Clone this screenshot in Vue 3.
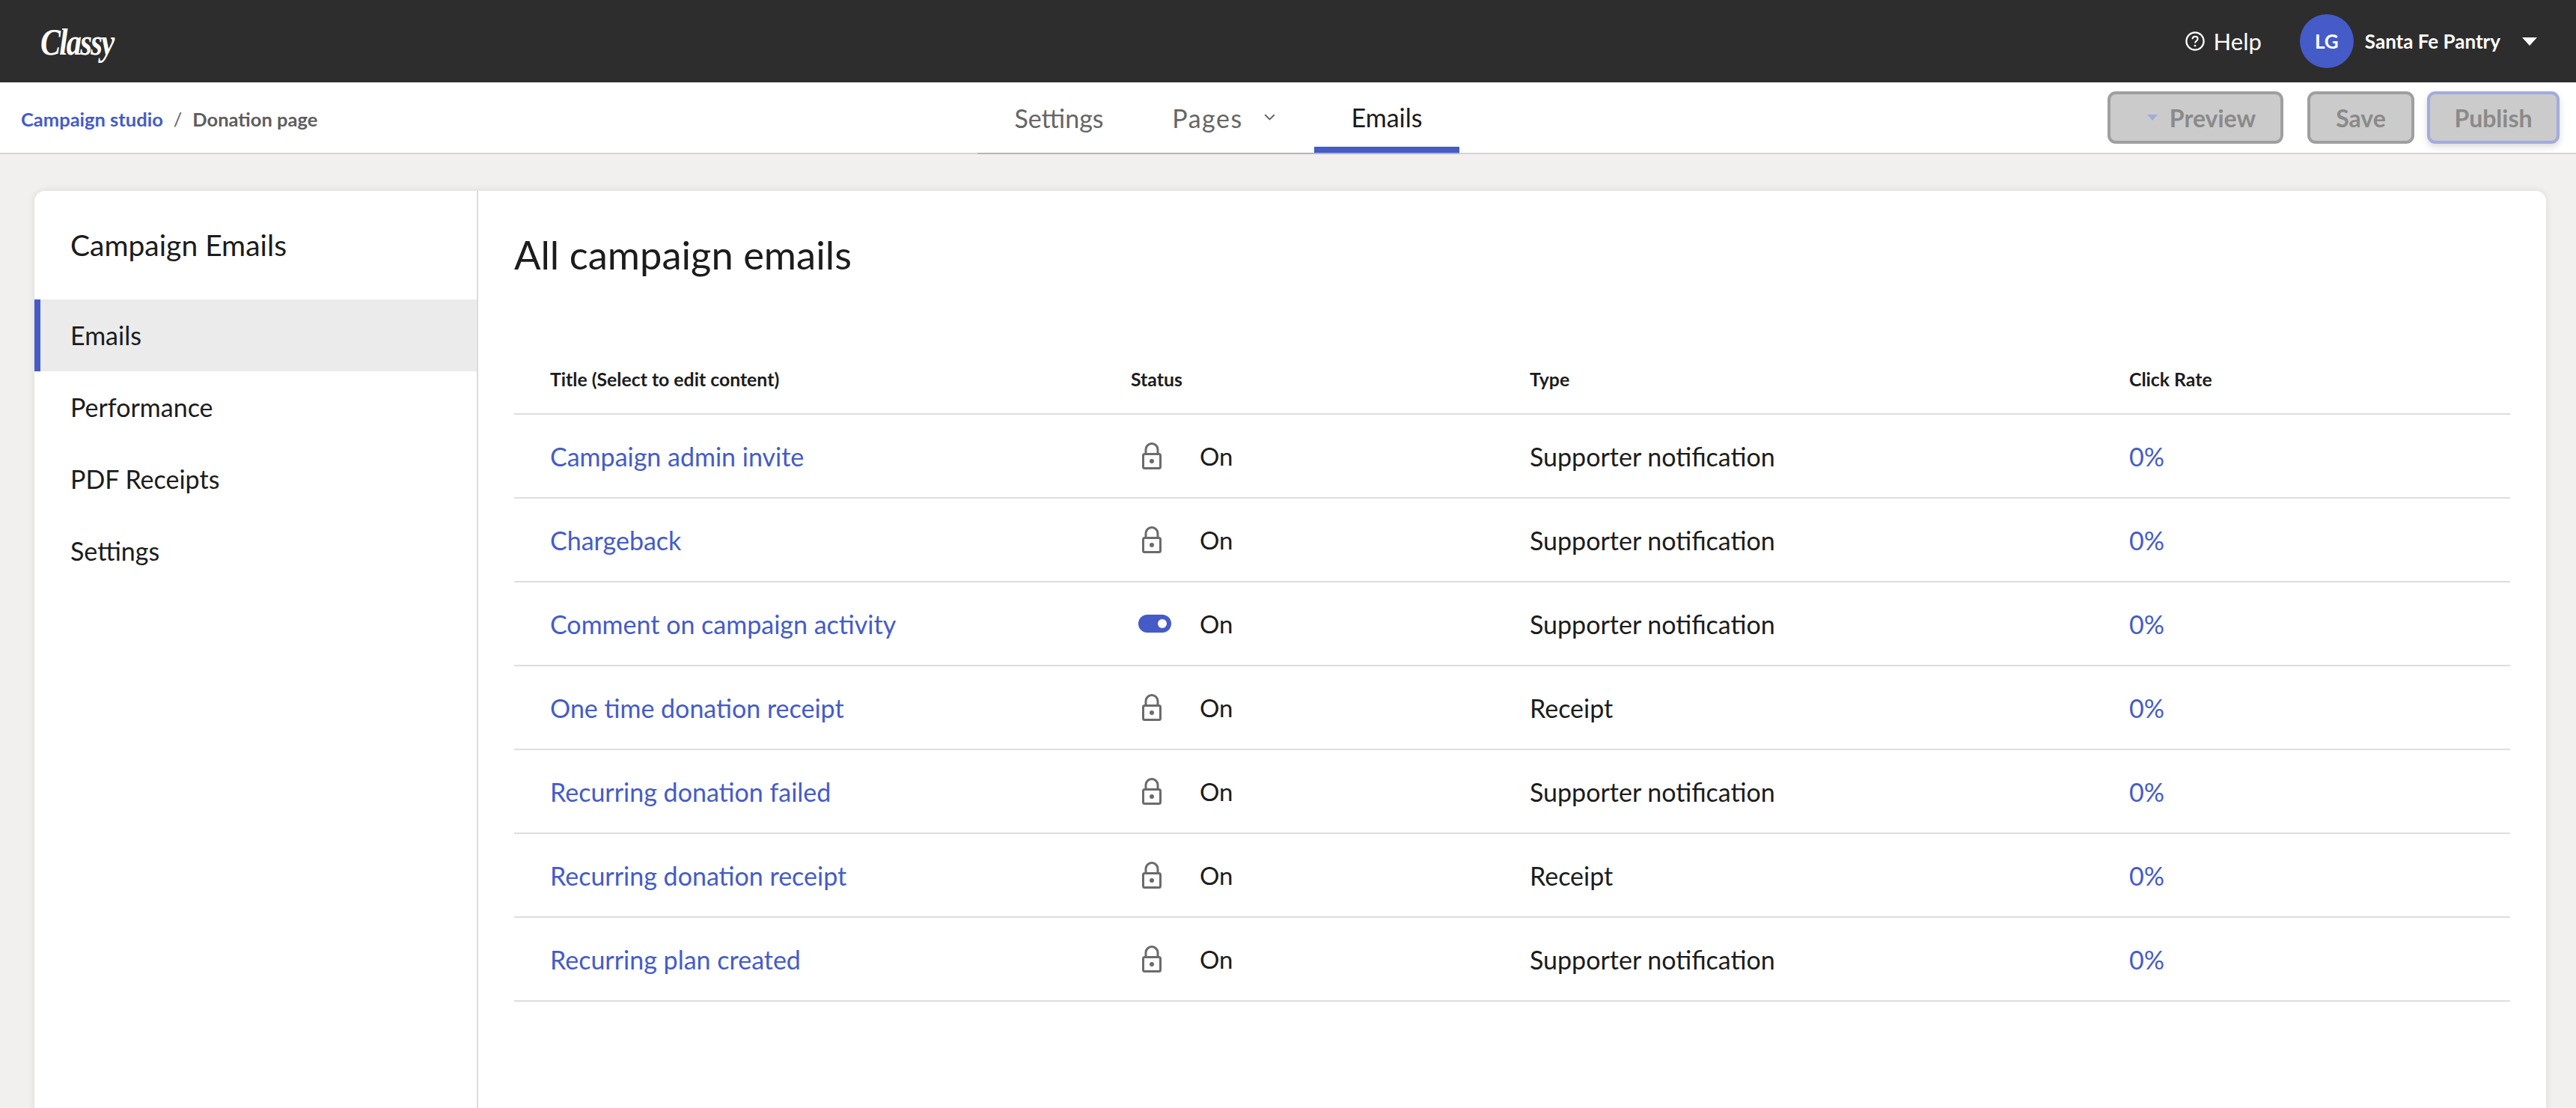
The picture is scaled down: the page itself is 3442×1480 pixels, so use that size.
<script setup>
const rows = [
  { title: 'Campaign admin invite', type: 'Supporter notification' },
  { title: 'Chargeback', type: 'Supporter notification' },
  { title: 'Comment on campaign activity', type: 'Supporter notification', toggle: true },
  { title: 'One time donation receipt', type: 'Receipt' },
  { title: 'Recurring donation failed', type: 'Supporter notification' },
  { title: 'Recurring donation receipt', type: 'Receipt' },
  { title: 'Recurring plan created', type: 'Supporter notification' },
]
const menu = ['Emails', 'Performance', 'PDF Receipts', 'Settings']
</script>

<template>
  <div class="page">
    <header class="top">
      <span class="logo">Classy</span>
      <div class="top-right">
        <svg class="help-icon" viewBox="0 0 28 28" width="26" height="26">
          <circle cx="14" cy="14" r="12.500" fill="none" stroke="#fff" stroke-width="2.400" />
          <path d="M10.200 11c.2-2.400 1.800-3.700 3.900-3.700 2.200 0 3.800 1.300 3.800 3.300 0 1.600-.9 2.400-2.100 3.200-1.100.7-1.700 1.400-1.700 2.800" fill="none" stroke="#fff" stroke-width="2.200" />
          <circle cx="14" cy="20.500" r="1.500" fill="#fff" />
        </svg>
        <span class="help">Help</span>
        <span class="avatar">LG</span>
        <span class="org">Santa Fe Pantry</span>
        <span class="caret"></span>
      </div>
    </header>
    <div class="sub">
      <div class="crumbs">
        <a class="crumb-link">Campaign studio</a>
        <span class="slash">/</span>
        <span class="crumb-cur">Donation page</span>
      </div>
      <nav class="tabs">
        <a class="tab tab-settings">Settings</a>
        <a class="tab tab-pages"><span class="pages-label">Pages</span>
          <svg viewBox="0 0 15 9" width="15" height="9" class="chev"><path d="M1.200 1.200 7.500 7.400 13.800 1.200" fill="none" stroke="#666" stroke-width="2" /></svg>
        </a>
        <a class="tab tab-active">Emails</a>
      </nav>
      <div class="actions">
        <button class="btn btn-preview"><span class="mini-caret"></span>Preview</button>
        <button class="btn btn-save">Save</button>
        <button class="btn btn-publish">Publish</button>
      </div>
    </div>
    <main class="main">
      <section class="card">
        <aside class="side">
          <h2 class="side-title">Campaign Emails</h2>
          <ul class="menu">
            <li v-for="(m, i) in menu" :key="m" class="menu-item" :class="{ active: i === 0 }">{{ m }}</li>
          </ul>
        </aside>
        <div class="content">
          <h1 class="title">All campaign emails</h1>
          <div class="row head">
            <span class="c1">Title (Select to edit content)</span>
            <span class="c2">Status</span>
            <span class="c3">Type</span>
            <span class="c4">Click Rate</span>
          </div>
          <div v-for="r in rows" :key="r.title" class="row body">
            <a class="c1 link">{{ r.title }}</a>
            <span class="c2 status">
              <span class="status-icon">
                <span v-if="r.toggle" class="toggle"><span class="knob"></span></span>
                <svg v-else viewBox="0 0 26 36" width="26" height="36">
                  <path d="M5 15V9.500a8 8 0 0 1 16 0V15" fill="none" stroke="#6b6b6b" stroke-width="3" />
                  <rect x="1.500" y="15.500" width="23" height="19" rx="2" fill="none" stroke="#6b6b6b" stroke-width="3" />
                  <circle cx="13" cy="25" r="3" fill="#6b6b6b" />
                </svg>
              </span>
              <span class="on">On</span>
            </span>
            <span class="c3 type">{{ r.type }}</span>
            <a class="c4 link rate">0%</a>
          </div>
        </div>
      </section>
    </main>
  </div>
</template>

<style>
html, body { margin: 0; background: #f1f0ee; }
</style>

<style scoped>
.page { width: 3442px; height: 1480px; overflow: hidden; background: #f1f0ee; font-family: "Lato", "Noto Sans", sans-serif; color: #1c1c1c; }
a { cursor: pointer; }
.top { height: 110px; background: #2d2d2d; display: flex; align-items: center; justify-content: space-between; box-sizing: border-box; padding: 0 52px 0 54px; }
.logo { font-family: "Liberation Serif", serif; font-style: italic; font-weight: 700; font-size: 46px; letter-spacing: -2px; color: #fff; transform: scale(.88, 1.12); transform-origin: left center; }
.top-right { display: flex; align-items: center; color: #fff; }
.help-icon { margin-right: 12px; }
.help { font-size: 31px; margin-right: 51px; }
.avatar { width: 72px; height: 72px; border-radius: 50%; background: #455bc8; display: flex; align-items: center; justify-content: center; font-size: 26px; font-weight: 700; margin-right: 15px; }
.org { font-size: 26px; font-weight: 700; margin-right: 29px; }
.caret { width: 0; height: 0; border: 10px solid transparent; border-top: 11px solid #fff; border-bottom: 0; }
.sub { height: 96px; box-sizing: border-box; background: #fff; border-bottom: 2px solid #d6d6d6; display: grid; grid-template-columns: 1306px 644px 1fr; }
.crumbs { display: flex; align-items: center; padding: 3px 0 0 28px; box-sizing: border-box; font-size: 25.500px; font-weight: 700; height: 94px; }
.crumb-link { color: #455bc8; }
.slash { color: #666; margin: 0 14px; font-weight: 400; }
.crumb-cur { color: #5e5e5e; }
.tabs { display: flex; height: 96px; border-bottom: 2px solid #b5b5b5; box-sizing: border-box; }
.tab { display: flex; align-items: center; justify-content: center; font-size: 34px; color: #666; box-sizing: border-box; height: 94px; }
.tab-settings { width: 218px; }
.tab-pages { width: 232px; gap: 28px; padding-right: 10px; }
.pages-label { letter-spacing: 1.500px; }
.chev { margin-top: -2px; }
.tab-active { width: 194px; color: #1c1c1c; border-bottom: 8px solid #455bc8; padding-top: 6px; }
.actions { display: flex; justify-content: flex-end; padding-top: 12px; padding-right: 22px; }
.btn { height: 70px; box-sizing: border-box; border: 4px solid #9f9f9f; border-radius: 11px; background: #cbcbcb; color: #8a8a8a; font-family: inherit; font-size: 32px; font-weight: 700; padding: 0; display: flex; align-items: center; justify-content: center; }
.btn-preview { width: 235px; margin-right: 32px; padding-left: 16px; }
.mini-caret { width: 0; height: 0; border: 7px solid transparent; border-top: 8px solid #a2abe0; border-bottom: 0; margin-right: 16px; }
.btn-save { width: 143px; margin-right: 17px; }
.btn-publish { width: 177px; border-color: #a2abe0; box-shadow: 0 4px 10px rgba(0,0,0,.15); }
.main { padding: 49px 40px 0 46px; }
.card { height: 1300px; background: #fff; border-radius: 14px 14px 0 0; box-shadow: 0 0 10px rgba(0,0,0,.1); display: flex; }
.side { width: 593px; box-sizing: border-box; border-right: 2px solid #dcdcdc; flex: none; }
.side-title { font-size: 39px; font-weight: 400; margin: 0; padding: 50px 0 0 48px; line-height: 44px; height: 145px; box-sizing: border-box; }
.menu { list-style: none; margin: 0; padding: 0; }
.menu-item { height: 96px; font-size: 34px; line-height: 96px; padding-left: 48px; box-sizing: border-box; }
.menu-item.active { background: #ebebeb; border-left: 8px solid #455bc8; padding-left: 40px; }
.content { flex: 1; padding: 0 48px; min-width: 0; }
.title { font-size: 52.500px; font-weight: 400; margin: 0; line-height: 60px; padding-top: 55px; height: 214px; box-sizing: border-box; }
.row { display: grid; grid-template-columns: 776px 533px 801px 1fr; padding-left: 48px; border-bottom: 2px solid #dedede; align-items: center; box-sizing: border-box; height: 112px; font-size: 34px; }
.head { height: 85px; font-size: 24.800px; font-weight: 700; padding-bottom: 8px; }
.link { color: #455bc8; }
.status { display: flex; align-items: center; }
.status-icon { width: 92px; display: flex; padding-left: 15px; box-sizing: border-box; flex: none; }
.on { font-size: 33px; }
.toggle { width: 44px; height: 24px; border-radius: 12px; background: #455bc8; position: relative; margin-left: -5px; }
.knob { position: absolute; width: 12px; height: 12px; border-radius: 50%; background: #fff; right: 6px; top: 6px; }
</style>
